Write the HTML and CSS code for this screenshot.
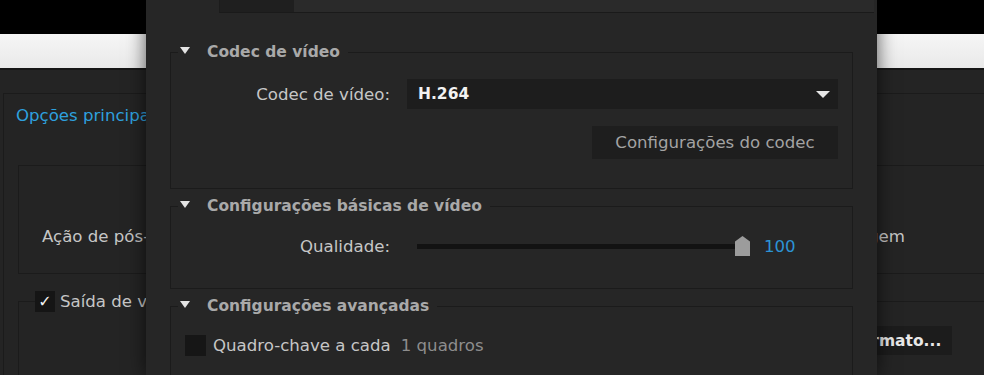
FILE: index.html
```html
<!DOCTYPE html>
<html lang="pt">
<head>
  <meta charset="UTF-8">
  <meta name="viewport" content="width=device-width, initial-scale=1.0">
  <title>Configurações de exportação</title>
  <link rel="stylesheet" href="styles.css">
</head>
<body>

  <div class="top-bar"></div>
  <div class="light-bar"></div>

  <!-- Page behind the dialog -->
  <div class="page">
    <div class="panel">
      <div class="panel-title">Opções principais de vídeo</div>
      <div class="panel-box">
        <div class="panel-row">
          <span class="panel-label">Ação de pós-codificação:</span>
          <span class="panel-value">Abrir imagem</span>
        </div>
      </div>
      <fieldset class="panel-group">
        <legend><span class="check">✓</span>Saída de vídeo</legend>
        <div class="panel-actions">
          <button class="btn-format">Formato...</button>
        </div>
      </fieldset>
    </div>
  </div>

  <!-- Export settings dialog -->
  <div class="dialog">
    <div class="dialog-tabs"><span class="tab"></span></div>

    <fieldset class="section section-codec">
      <legend><span class="tri"></span>Codec de vídeo</legend>
      <div class="row">
        <label class="row-label">Codec de vídeo:</label>
        <div class="select">H.264<span class="select-arrow"></span></div>
      </div>
      <div class="row row-end">
        <button class="btn">Configurações do codec</button>
      </div>
    </fieldset>

    <fieldset class="section section-basic">
      <legend><span class="tri"></span>Configurações básicas de vídeo</legend>
      <div class="row">
        <label class="row-label">Qualidade:</label>
        <div class="slider">
          <div class="slider-track"></div>
          <div class="slider-thumb"></div>
        </div>
        <span class="slider-value">100</span>
      </div>
    </fieldset>

    <fieldset class="section section-advanced">
      <legend><span class="tri"></span>Configurações avançadas</legend>
      <div class="row">
        <span class="box"></span>
        <span class="box-label">Quadro-chave a cada</span>
        <span class="box-hint">1 quadros</span>
      </div>
    </fieldset>
  </div>

</body>
</html>
```

FILE: styles.css
```css
/* Reset */
body, fieldset, legend, button {
    margin: 0;
    padding: 0;
    box-sizing: border-box;
}

body {
    font-family: 'DejaVu Sans', 'Liberation Sans', sans-serif;
    font-size: 16.6px;
    background: #242424;
    color: #c6c6c6;
    height: 375px;
    overflow: hidden;
    position: relative;
}

/* Top bars of the page */
.top-bar {
    height: 34px;
    background: #000;
}

.light-bar {
    height: 34px;
    background: linear-gradient(180deg, #f6f6f6, #e9e9e9);
    border-bottom: 2px solid #161616;
}

/* Background panel */
.page {
    padding: 23px 0 0 3px;
}

.panel {
    width: 1100px;
    border-top: 1px solid #1b1b1b;
    border-left: 1px solid #1b1b1b;
}

.panel-title {
    padding: 12px 0 0 12px;
    line-height: 20px;
    color: #2ea0de;
}

.panel-box {
    box-sizing: border-box;
    margin: 39px 0 0 14px;
    height: 109px;
    padding: 61px 0 0 23px;
    border: 1px solid #1b1b1b;
    border-right: none;
}

.panel-row {
    display: flex;
    line-height: 20px;
    width: 863px;
}

.panel-value {
    margin-left: auto;
}

.panel-group {
    margin: 17px 0 0 14px;
    height: 120px;
    border: 1px solid #1b1b1b;
    border-right: none;
}

.panel-group legend {
    margin-left: 16px;
    padding-right: 6px;
    line-height: 21px;
    color: #c6c6c6;
}

.check {
    display: inline-block;
    width: 20px;
    height: 21px;
    margin-right: 5px;
    background: #151515;
    color: #f2f2f2;
    text-align: center;
    font-size: 16px;
    vertical-align: top;
}

.panel-actions {
    padding: 14px 0 0 815px;
}

.btn-format {
    width: 118px;
    height: 29px;
    padding-left: 6px;
    border: none;
    background: #1c1c1c;
    color: #e8e8e8;
    font-family: inherit;
    font-size: 15.5px;
    font-weight: bold;
}

/* Dialog */
.dialog {
    position: absolute;
    left: 146px;
    top: 0;
    width: 731px;
    height: 375px;
    background: #262626;
    box-shadow: 0 0 18px rgba(0, 0, 0, 0.65);
}

.dialog-tabs {
    display: flex;
    margin-left: 73px;
    width: 654px;
    height: 12px;
    background: #2a2a2a;
    border-left: 1px solid #1c1c1c;
    border-bottom: 1px solid #1a1a1a;
}

.tab {
    width: 74px;
    background: #1f1f1f;
}

/* Sections */
.section {
    margin: 7px 24px 0 24px;
    border: 1px solid #1b1b1b;
}

.section-codec {
    margin-top: 29px;
    padding-bottom: 29px;
}

.section-basic {
    padding-bottom: 32px;
}

.section-advanced {
    height: 90px;
}

.section legend {
    margin-left: 7px;
    padding: 0 8px 0 2px;
    line-height: 20px;
    font-size: 15.5px;
    font-weight: bold;
    color: #a9a9a9;
}

.tri {
    display: inline-block;
    width: 0;
    height: 0;
    margin-right: 17px;
    border-left: 5px solid transparent;
    border-right: 5px solid transparent;
    border-top: 7px solid #e4e4e4;
    vertical-align: 3px;
}

.row {
    display: flex;
    align-items: center;
    margin-top: 17px;
}

.section-basic .row {
    margin-top: 20px;
    height: 20px;
}

.section-advanced .row {
    margin-top: 19px;
}

.row-end {
    justify-content: flex-end;
    padding-right: 14px;
}

.row-label {
    width: 219px;
    text-align: right;
    color: #c6c6c6;
}

/* Dropdown */
.select {
    display: flex;
    align-items: center;
    justify-content: space-between;
    margin-left: 17px;
    width: 431px;
    height: 30px;
    padding: 0 8px 0 11px;
    box-sizing: border-box;
    background: #1d1d1d;
    color: #f2f2f2;
    font-size: 15.5px;
    font-weight: bold;
}

.select-arrow {
    width: 0;
    height: 0;
    border-left: 7px solid transparent;
    border-right: 7px solid transparent;
    border-top: 7px solid #e6e6e6;
}

.btn {
    width: 246px;
    height: 33px;
    border: none;
    background: #1e1e1e;
    color: #a3a3a3;
    font-family: inherit;
    font-size: 16.6px;
}

/* Slider */
.slider {
    position: relative;
    margin-left: 27px;
    width: 333px;
    height: 20px;
}

.slider-track {
    margin-top: 8px;
    width: 325px;
    height: 5px;
    background: #121212;
}

.slider-thumb {
    position: absolute;
    right: 0;
    top: 0;
    width: 15px;
    height: 20px;
    background: #9c9c9c;
    clip-path: polygon(50% 0, 100% 28%, 100% 100%, 0 100%, 0 28%);
}

.slider-value {
    margin-left: 14px;
    color: #2c93d4;
}

/* Checkbox row */
.box {
    width: 21px;
    height: 21px;
    margin-left: 14px;
    background: #161616;
}

.box-label {
    margin-left: 7px;
}

.box-hint {
    margin-left: 10px;
    color: #8d8d8d;
}
```
